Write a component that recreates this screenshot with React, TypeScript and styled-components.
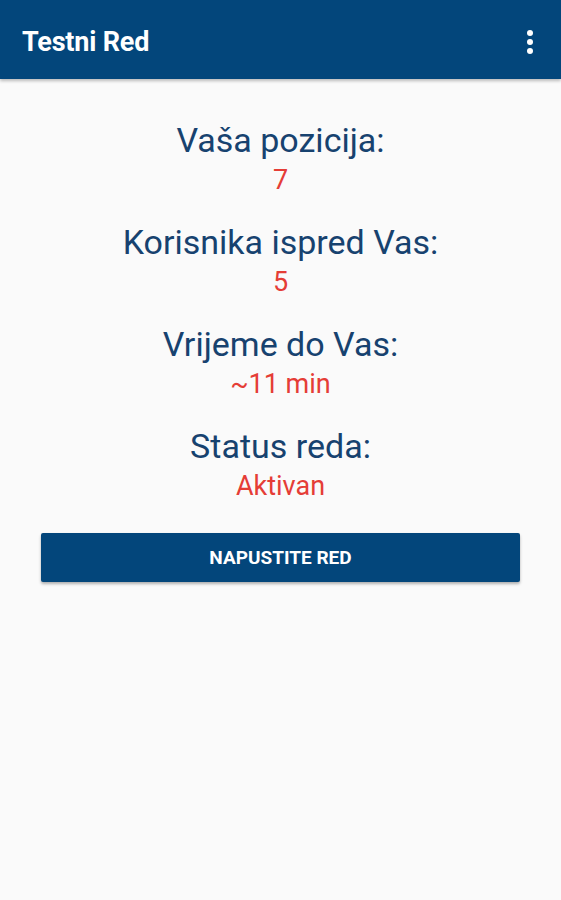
import React from 'react'
import styled, { createGlobalStyle } from 'styled-components'

const GlobalStyle = createGlobalStyle`
  body {
    margin: 0;
    background: #fafafa;
    font-family: Roboto, 'Liberation Sans', sans-serif;
  }
`

const Screen = styled.div`
  width: 561px;
  min-height: 900px;
  background: #fafafa;
  display: flex;
  flex-direction: column;
`

const Toolbar = styled.header`
  height: 79px;
  background: #03467b;
  display: flex;
  align-items: center;
  justify-content: space-between;
  padding: 4px 28px 0 22px;
  box-sizing: border-box;
  box-shadow: 0 2px 3px rgba(0, 0, 0, 0.25);
`

const Title = styled.h1`
  margin: 0;
  color: #ffffff;
  font-size: 27px;
  font-weight: 700;
  letter-spacing: -0.2px;
`

const Kebab = styled.div`
  display: flex;
  flex-direction: column;
  gap: 3px;
  span {
    width: 6px;
    height: 6px;
    border-radius: 50%;
    background: #fff;
  }
`

const Content = styled.main`
  display: flex;
  flex-direction: column;
  align-items: center;
  padding: 41px 41px 0;
  gap: 22px;
`

const InfoGroup = styled.div`
  display: flex;
  flex-direction: column;
  align-items: center;
`

const Label = styled.div`
  color: #17426f;
  font-size: 34px;
  line-height: 40px;
`

const Value = styled.div`
  color: #e53d36;
  font-size: 27px;
  line-height: 40px;
`

const LeaveButton = styled.button`
  margin-top: 5px;
  width: 479px;
  height: 49px;
  border: none;
  border-radius: 2px;
  background: #03467b;
  color: #fff;
  font-family: Roboto, 'Liberation Sans', sans-serif;
  font-size: 19px;
  font-weight: 700;
  box-shadow: 0 2px 3px rgba(0, 0, 0, 0.3);
`

const items = [
  { label: 'Vaša pozicija:', value: '7' },
  { label: 'Korisnika ispred Vas:', value: '5' },
  { label: 'Vrijeme do Vas:', value: '~11 min' },
  { label: 'Status reda:', value: 'Aktivan' },
]

const App = () => {
  return (
    <Screen>
      <GlobalStyle />
      <Toolbar>
        <Title>Testni Red</Title>
        <Kebab>
          <span />
          <span />
          <span />
        </Kebab>
      </Toolbar>
      <Content>
        {items.map((item) => (
          <InfoGroup key={item.label}>
            <Label>{item.label}</Label>
            <Value>{item.value}</Value>
          </InfoGroup>
        ))}
        <LeaveButton>NAPUSTITE RED</LeaveButton>
      </Content>
    </Screen>
  )
}

export default App
